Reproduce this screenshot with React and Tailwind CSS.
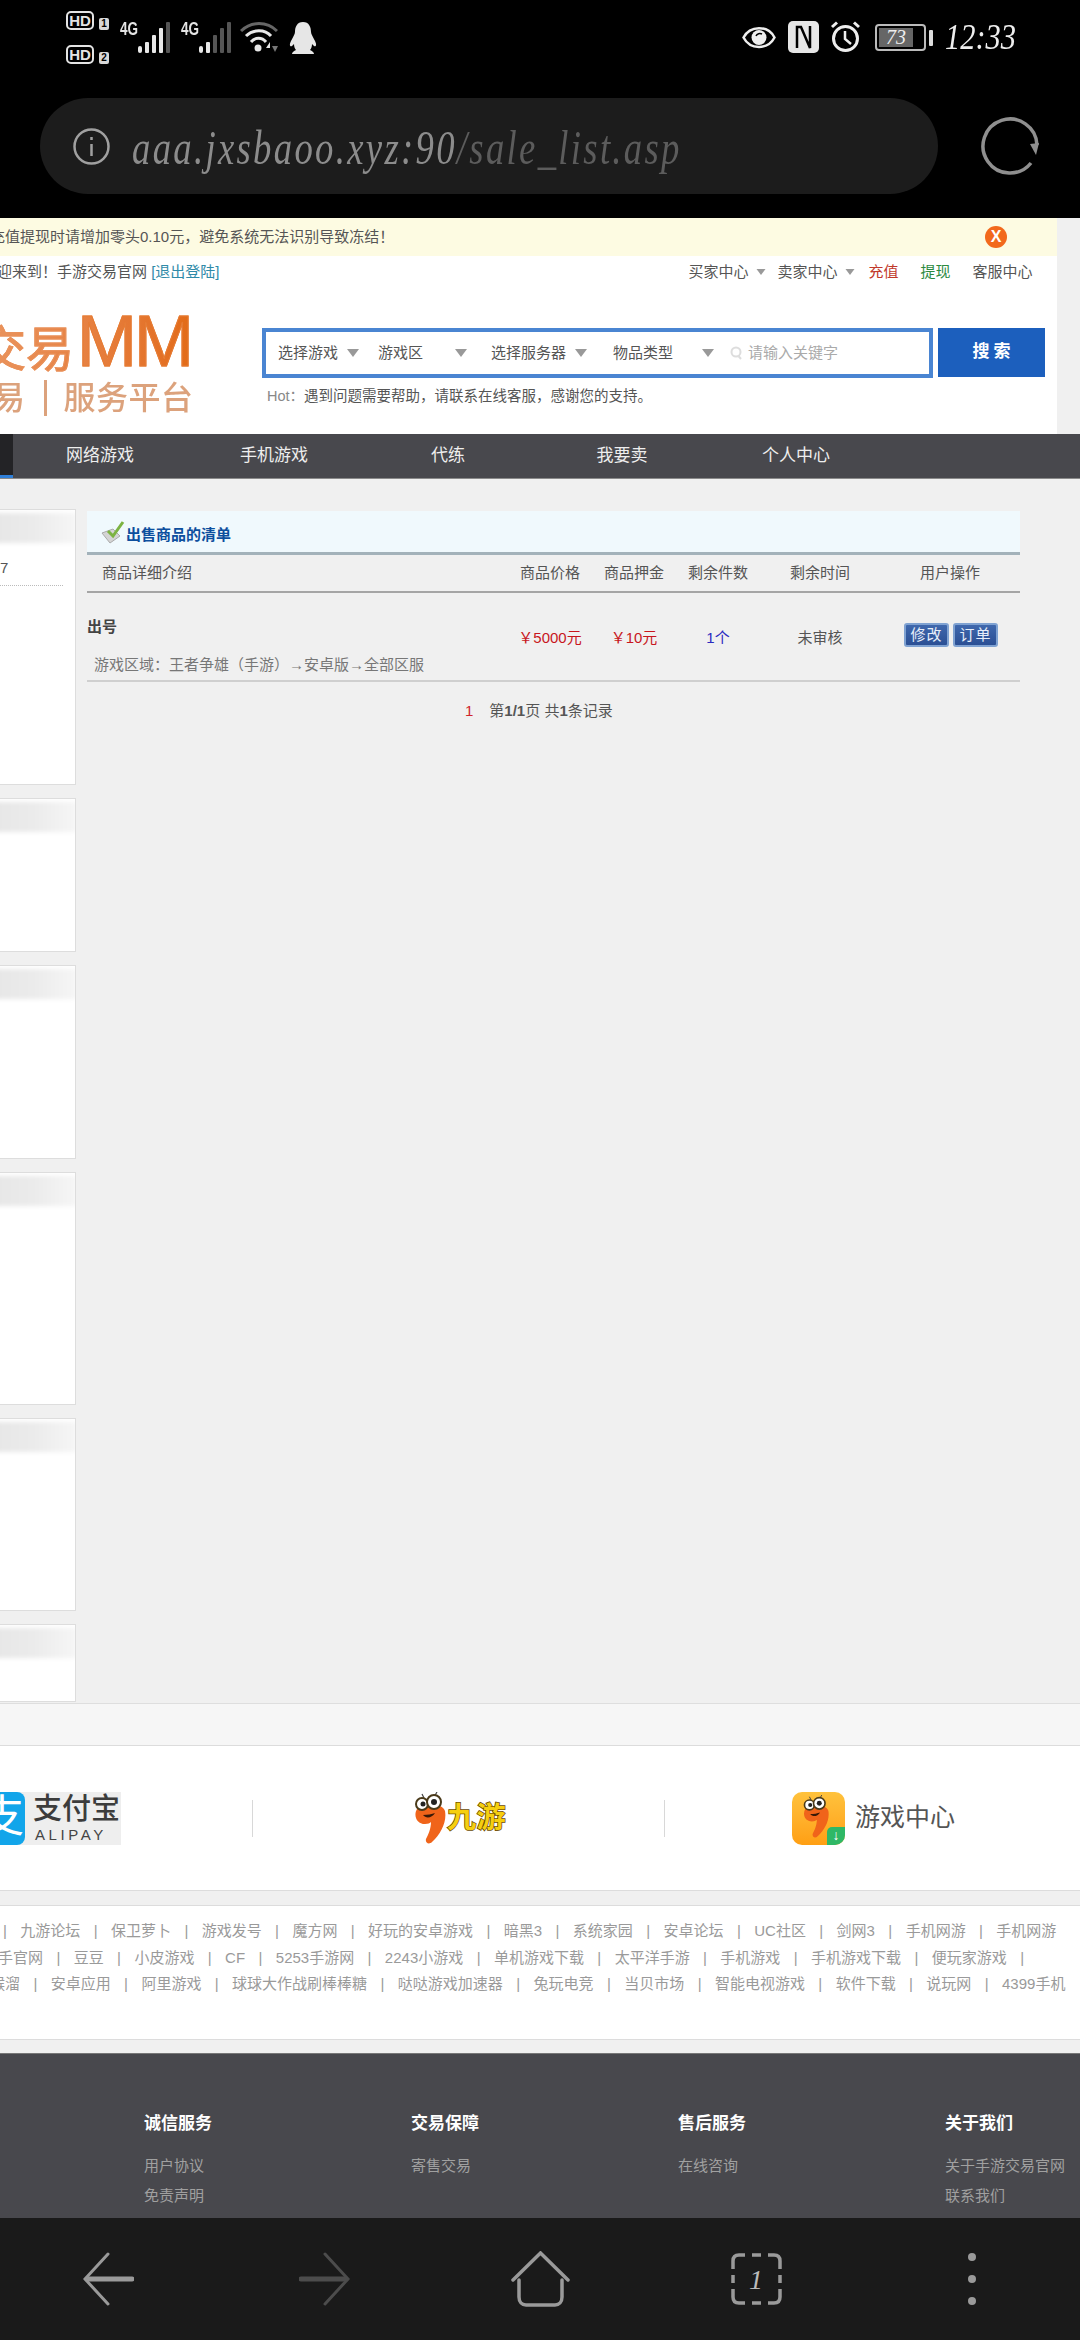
import React from 'react';

const sans = "font-['Liberation_Sans','Noto_Sans_CJK_SC',sans-serif]";

const menuItems = ['网络游戏', '手机游戏', '代练', '我要卖', '个人中心'];

const linkRows = [
  { offset: 'ml-[3px]', lead: true, items: ['九游论坛', '保卫萝卜', '游戏发号', '魔方网', '好玩的安卓游戏', '暗黑3', '系统家园', '安卓论坛', 'UC社区', '剑网3', '手机网游', '手机网游'] },
  { offset: 'ml-[-2px]', trail: true, items: ['手官网', '豆豆', '小皮游戏', 'CF', '5253手游网', '2243小游戏', '单机游戏下载', '太平洋手游', '手机游戏', '手机游戏下载', '便玩家游戏'] },
  { offset: 'ml-[-10px]', items: ['猴溜', '安卓应用', '阿里游戏', '球球大作战刷棒棒糖', '哒哒游戏加速器', '兔玩电竞', '当贝市场', '智能电视游戏', '软件下载', '说玩网', '4399手机'] },
];

const footerColumns = [
  { title: '诚信服务', links: ['用户协议', '免责声明'] },
  { title: '交易保障', links: ['寄售交易'] },
  { title: '售后服务', links: ['在线咨询'] },
  { title: '关于我们', links: ['关于手游交易官网', '联系我们'] },
];

const sidePanels = ['h-[276px]', 'h-[154px]', 'h-[194px]', 'h-[233px]', 'h-[193px]', 'h-[78px]'];

const HdBadge = ({ n }) => (
  <div className="flex items-end h-[19px]">
    <div className="w-[28px] h-[19px] rounded-[5px] border-2 border-[#e4e4e4] text-[#e4e4e4] text-[15px] font-bold leading-[15px] text-center">HD</div>
    <div className="ml-[5px] w-[10px] h-[12px] rounded-[2px] bg-[#d8d8d8] text-black text-[10px] font-bold leading-[12px] text-center">{n}</div>
  </div>
);

const Signal = ({ dim }) => (
  <div className="flex items-start">
    <span className="mt-[22px] w-[18px] text-[18px] font-bold leading-[15px] text-[#e4e4e4] scale-x-[.75] origin-left">4G</span>
    <svg width="32" height="31" viewBox="0 0 32 31" className="mt-[22px]">
      <rect x="0" y="24" width="4" height="7" rx="2" fill="#e8e8e8" />
      <rect x="7" y="20" width="4" height="11" rx="1" fill="#e8e8e8" />
      <rect x="14" y="13" width="4" height="18" rx="1" fill={dim >= 2 ? '#555' : '#e8e8e8'} />
      <rect x="21" y="6" width="4" height="25" rx="1" fill={dim >= 2 ? '#555' : '#e8e8e8'} />
      <rect x="28" y="0" width="4" height="31" rx="1" fill="#555" />
    </svg>
  </div>
);

const Wifi = () => (
  <svg width="38" height="31" viewBox="0 0 38 31" className="ml-[9px] mt-[22px]" fill="none">
    <path d="M1 9 C11 -1 27 -1 37 9" stroke="#666" strokeWidth="3" />
    <path d="M6 14 C13 7 25 7 31 14" stroke="#e8e8e8" strokeWidth="3" />
    <path d="M11 20 C15 15 22 15 26 20" stroke="#e8e8e8" strokeWidth="3" />
    <circle cx="18" cy="26" r="3.5" fill="#e8e8e8" />
    <path d="M26 26 l4 -6 v6 z" fill="#e8e8e8" />
    <path d="M32 24 h6 l-3 6 z" fill="#777" />
  </svg>
);

const Penguin = () => (
  <svg width="28" height="32" viewBox="0 0 28 32" className="ml-[11px] mt-[22px]" fill="#e6e6e6">
    <path d="M14 0 C20 0 22 5 22 10 C22 12 24 15 26 19 C28 23 27 25 25 24 L23 22 C23 25 22 27 21 28 C23 29 25 30 25 32 L3 32 C3 30 5 29 7 28 C6 27 5 25 5 22 L3 24 C1 25 0 23 2 19 C4 15 6 12 6 10 C6 5 8 0 14 0 Z" />
  </svg>
);

const Eye = () => (
  <svg width="34" height="27" viewBox="0 0 34 27" fill="none" className="mt-[24px]">
    <path d="M1.5 13.5 C8 1 26 1 32.5 13.5 C26 26 8 26 1.5 13.5 Z" stroke="#eee" strokeWidth="2.5" />
    <circle cx="17" cy="13.5" r="7.5" fill="#eee" />
    <path d="M14 12 C15 9.5 18 9 20 10" stroke="#000" strokeWidth="1.5" />
  </svg>
);

const Nfc = () => (
  <svg width="31" height="32" viewBox="0 0 31 32" className="ml-[12px] mt-[21px]">
    <rect width="31" height="32" rx="5" fill="#e6e6e6" />
    <path d="M9 27 V6 H13 L22 27 V5" fill="none" stroke="#000" strokeWidth="2.5" />
  </svg>
);

const Alarm = () => (
  <svg width="31" height="31" viewBox="0 0 31 31" fill="none" className="ml-[11px] mt-[21px]">
    <circle cx="15.5" cy="17.5" r="12" stroke="#eee" strokeWidth="3" />
    <path d="M15 10 V18 L21 23" stroke="#eee" strokeWidth="2.5" />
    <path d="M2 6 L7 1.5 M29 6 L24 1.5" stroke="#eee" strokeWidth="3" />
  </svg>
);

const Battery = () => (
  <div className="flex items-center ml-[14px] mt-[24px]">
    <div className="w-[51px] h-[27px] rounded-[4px] border-2 border-[#bbb] p-[2px]">
      <div className="w-[34px] h-full bg-[#666] text-[#eee] text-[20px] italic leading-[19px] text-center font-['Liberation_Serif',serif]">73</div>
    </div>
    <div className="ml-[3px] w-[4px] h-[16px] bg-[#ddd] rounded-[1px]"></div>
  </div>
);

const StatusBar = () => (
  <div className="h-[98px] flex justify-between pl-[66px] pr-[65px]">
    <div className="flex">
      <div className="flex flex-col gap-[15px] pt-[11px] w-[54px]">
        <HdBadge n="1" />
        <HdBadge n="2" />
      </div>
      <Signal dim={1} />
      <div className="w-[11px]"></div>
      <Signal dim={2} />
      <Wifi />
      <Penguin />
    </div>
    <div className="flex items-start">
      <Eye />
      <Nfc />
      <Alarm />
      <Battery />
      <span className="ml-[12px] mt-[19px] w-[70px] whitespace-nowrap text-[35px] leading-[37px] italic text-[#eee] scale-x-[.87] origin-left font-['Liberation_Serif',serif]">12:33</span>
    </div>
  </div>
);

const AddressBar = () => (
  <div className="h-[96px] flex items-center">
    <div className="ml-[40px] w-[898px] shrink-0 h-full rounded-full bg-[#1c1c1c] flex items-center pl-[33px]">
      <svg width="37" height="37" viewBox="0 0 37 37" fill="none" stroke="#a0a0a0" strokeWidth="2.5" className="shrink-0">
        <circle cx="18.5" cy="18.5" r="17" />
        <path d="M18.5 16 V28" />
        <path d="M18.5 9 V12" />
      </svg>
      <div className="ml-[22px] mt-[3px] text-[48px] leading-[56px] italic tracking-[3px] scale-x-[.765] origin-left whitespace-nowrap font-['Liberation_Serif',serif] text-[#8c8c8c]">
        aaa.jxsbaoo.xyz:90<span className="text-[#5c5c5c]">/sale_list.asp</span>
      </div>
    </div>
    <svg width="58" height="58" viewBox="0 0 58 58" fill="none" className="ml-[43px] shrink-0">
      <path d="M50 46 A27 27 0 1 1 56 28" stroke="#8f8f8f" strokeWidth="3.5" />
      <path d="M58 26 L55 38 L49 27 Z" fill="#8f8f8f" />
    </svg>
  </div>
);

const Caret = ({ className = '' }) => (
  <span className={`inline-block w-0 h-0 border-x-[6px] border-x-transparent border-t-[8px] border-t-[#999] ${className}`}></span>
);

const SearchBox = () => (
  <div className="flex items-start">
    <div className="w-[671px] h-[50px] border-[4px] border-[#4a85d2] bg-white flex items-center text-[15px] text-[#555] whitespace-nowrap">
      <span className="ml-[12px]">选择游戏</span>
      <Caret className="ml-[9px]" />
      <span className="ml-[19px]">游戏区</span>
      <Caret className="ml-[32px]" />
      <span className="ml-[24px]">选择服务器</span>
      <Caret className="ml-[9px]" />
      <span className="ml-[26px]">物品类型</span>
      <Caret className="ml-[29px]" />
      <svg width="12" height="14" viewBox="0 0 12 14" fill="none" stroke="#ddd" strokeWidth="2" className="ml-[16px]">
        <circle cx="6" cy="6" r="4.5" />
        <path d="M8.5 10 L11 13" />
      </svg>
      <span className="ml-[6px] text-[#aaa]">请输入关键字</span>
    </div>
    <div className="ml-[5px] w-[107px] h-[49px] bg-[#1c5fbd] text-white font-bold text-[17px] tracking-[4px] leading-[47px] text-center pl-[4px]">搜索</div>
  </div>
);

const Logo = () => (
  <div className="w-[262px] pt-[20px] overflow-hidden whitespace-nowrap">
    <div className="ml-[-22px] w-[216px] h-[66px] leading-[66px] blur-[0.4px] text-transparent bg-clip-text bg-linear-to-r from-[#ea9660] to-[#e26a14]">
      <span className="text-[48px] [-webkit-text-stroke:1px_#e9915a]">交易</span>
      <span className="ml-[3px] text-[72px] tracking-[-3px] font-['Liberation_Sans',sans-serif] [-webkit-text-stroke:1px_#e67c34]">MM</span>
    </div>
    <div className="mt-[5px] ml-[-7px] flex items-center h-[38px] font-medium text-[#dca27c] text-[32px] tracking-[0.5px] leading-[38px] blur-[0.4px]">
      <span>易</span>
      <span className="ml-[18px] w-[3px] h-[36px] bg-[#dca27c]"></span>
      <span className="ml-[17px]">服务平台</span>
    </div>
  </div>
);

const Header = () => (
  <div className="w-[1057px] h-[216px] bg-white">
    <div className="h-[38px] bg-[#fdfbe2] flex items-center justify-between pr-[50px] text-[15px] text-[#555]">
      <span className="ml-[-10px]">充值提现时请增加零头0.10元，避免系统无法识别导致冻结！</span>
      <span className="w-[22px] h-[22px] rounded-full bg-[#f2691c] text-white text-[16px] font-bold leading-[22px] text-center">X</span>
    </div>
    <div className="h-[32px] flex items-center text-[15px] text-[#555] whitespace-nowrap">
      <span className="ml-[-18px]">欢迎来到！手游交易官网 <span className="text-[#2f8aa8]">[退出登陆]</span></span>
      <span className="ml-[469px]">买家中心</span>
      <Caret className="ml-[6px] scale-75" />
      <span className="ml-[11px]">卖家中心</span>
      <Caret className="ml-[6px] scale-75" />
      <span className="ml-[13px] text-[#c1392b]">充值</span>
      <span className="ml-[22px] text-[#2c8a3f]">提现</span>
      <span className="ml-[22px]">客服中心</span>
    </div>
    <div className="flex">
      <Logo />
      <div className="pt-[40px]">
        <SearchBox />
        <div className="mt-[8px] ml-[5px] text-[14.5px] leading-[20px] text-[#555]">
          <span className="text-[#888]">Hot：</span>遇到问题需要帮助，请联系在线客服，感谢您的支持。
        </div>
      </div>
    </div>
  </div>
);

const Nav = () => (
  <div className="h-[45px] bg-[#48484d] flex border-b border-b-[#8a8a8a]">
    <div className="w-[13px] h-full bg-[#232326] border-b-[3px] border-b-[#2f7fd8]"></div>
    {menuItems.map((item) => (
      <div key={item} className="w-[174px] text-center text-[17px] leading-[43px] text-[#eee]">{item}</div>
    ))}
  </div>
);

const SidePanel = ({ height, first }) => (
  <div className={`${height} bg-white border border-[#ddd] border-l-0 overflow-hidden`}>
    <div className="h-[30px] mt-[3px] ml-[-12px] mr-[-2px] bg-linear-to-r from-[#e6e6e6] via-[#ebebeb] to-[#f6f6f6] blur-[2px]"></div>
    {first && (
      <div className="mt-[15px] pr-[12px]">
        <div className="text-[15px] leading-[20px] text-[#555]">7</div>
        <div className="mt-[7px] border-b border-dotted border-[#bbb]"></div>
      </div>
    )}
  </div>
);

const Sidebar = () => (
  <div className="w-[76px] shrink-0 flex flex-col gap-[13px]">
    {sidePanels.map((height, i) => (
      <SidePanel key={height} height={height} first={i === 0} />
    ))}
  </div>
);

const CheckIcon = () => (
  <svg width="25" height="24" viewBox="0 0 25 24" fill="none">
    <path d="M1 13 L12 9 L19 16 L9 23 Z" fill="#d4d4d4" stroke="#aaa" />
    <path d="M7 11 L12 16 L22 2" stroke="#7cb342" strokeWidth="3" />
  </svg>
);

const tableCols = 'grid grid-cols-[421px_84px_84px_84px_120px_140px] items-center text-center';

const OpButton = ({ label }) => (
  <span className="w-[45px] h-[24px] rounded-[3px] border-2 border-[#7fa2d2] bg-linear-to-b from-[#3f68ad] to-[#2b4f94] text-[#e6eefa] text-[15px] leading-[20px] tracking-[1px]">{label}</span>
);

const SaleTable = () => (
  <div className="ml-[11px] w-[933px] mt-[2px] text-[15px]">
    <div className="h-[44px] bg-[#f0f9fd] border-b-[3px] border-b-[#a3b2ba] flex items-center pl-[14px]">
      <CheckIcon />
      <span className="mt-[7px] font-bold text-[#0d4f9e]">出售商品的清单</span>
    </div>
    <div className={`${tableCols} h-[38px] border-b-2 border-b-[#a5a5a5] text-[#555]`}>
      <div className="text-left pl-[15px]">商品详细介绍</div>
      <div>商品价格</div>
      <div>商品押金</div>
      <div>剩余件数</div>
      <div>剩余时间</div>
      <div>用户操作</div>
    </div>
    <div className="h-[89px] pt-[15px] border-b-2 border-b-[#cfcfcf]">
      <div className={`${tableCols} h-[60px]`}>
        <div className="text-left font-bold text-[#444] mb-[22px]">出号</div>
        <div className="text-[#c8161d]">￥5000元</div>
        <div className="text-[#c8161d]">￥10元</div>
        <div className="text-[#2a2ac0]">1个</div>
        <div className="text-[#555]">未审核</div>
        <div className="flex justify-center gap-[4px] pl-[2px] mb-[6px]">
          <OpButton label="修改" />
          <OpButton label="订单" />
        </div>
      </div>
      <div className="pl-[7px] mt-[-13px] leading-[20px] text-[#777]">游戏区域：王者争雄（手游）→安卓版→全部区服</div>
    </div>
    <div className="mt-[19px] leading-[20px] flex text-[#555] pl-[378px]">
      <span className="text-[#d0262c]">1</span>
      <span className="ml-[16px]">第<b>1/1</b>页 共<b>1</b>条记录</span>
    </div>
  </div>
);

const Mascot = ({ width, height }) => (
  <svg width={width} height={height} viewBox="0 0 34 52">
    <path d="M4 17 C0 24 4 32 12 32 C15 32 17 31 18 30 C18 37 15 43 13 47 C12 51 16 53 19 50 C28 42 34 30 32 19 C30 11 8 9 4 17 Z" fill="#f0641a" />
    <path d="M9 2 L11 6 M24 0 L21 5" stroke="#444" strokeWidth="1.2" />
    <circle cx="9" cy="12" r="6" fill="#fff" stroke="#4a3a1a" strokeWidth="2" />
    <circle cx="21" cy="10" r="7" fill="#fff" stroke="#4a3a1a" strokeWidth="2" />
    <circle cx="10" cy="12" r="2.5" fill="#222" />
    <circle cx="21" cy="10" r="3" fill="#222" />
    <path d="M10 23 C13 27 19 26 22 21 C19 22 14 23 10 23 Z" fill="#3a1a08" />
  </svg>
);

const Partners = () => (
  <div className="h-[146px] bg-white border-y border-y-[#dcdcdc] flex items-center overflow-hidden">
    <div className="w-[121px] h-[53px] flex shrink-0 bg-[#eeeeee]">
      <div className="w-[25px] h-full bg-[#12a5ea] rounded-r-[8px] overflow-hidden text-white text-[44px] leading-[50px] whitespace-nowrap">
        <span className="block ml-[-20px]">支</span>
      </div>
      <div className="ml-[8px]">
        <div className="text-[29px] leading-[34px] text-[#3c3c3c] font-medium whitespace-nowrap">支付宝</div>
        <div className="text-[15px] leading-[18px] tracking-[3.6px] text-[#444] pl-[2px]">ALIPAY</div>
      </div>
    </div>
    <div className="ml-[131px] w-px h-[37px] bg-[#d8d8d8]"></div>
    <div className="ml-[160px] flex items-center">
      <Mascot width={34} height={52} />
      <span className="text-[29px] font-bold tracking-[0.5px] leading-[32px] text-[#f6cf10] [-webkit-text-stroke:1.5px_#6a4a00] [paint-order:stroke_fill] whitespace-nowrap">九游</span>
    </div>
    <div className="ml-[158px] w-px h-[37px] bg-[#d8d8d8]"></div>
    <div className="ml-[127px] relative w-[53px] h-[53px] rounded-[10px] bg-linear-to-b from-[#ffc23c] to-[#ff9f12] overflow-hidden flex justify-center pt-[3px] pr-[6px]">
      <Mascot width={28} height={43} />
      <div className="absolute right-0 bottom-0 w-[18px] h-[18px] bg-[#2fb866] rounded-tl-[5px] text-white text-[14px] leading-[17px] font-bold text-center">↓</div>
    </div>
    <div className="ml-[10px] text-[25px] text-[#555] whitespace-nowrap">游戏中心</div>
  </div>
);

const FriendLinks = () => (
  <div className="h-[135px] bg-white border-y border-y-[#dcdcdc] pt-[12px] text-[15px] leading-[26.5px] text-[#9a9a9a] overflow-hidden">
    {linkRows.map((row) => (
      <div key={row.items[0]} className={`flex gap-[13.4px] whitespace-nowrap ${row.offset}`}>
        {row.lead && <span>|</span>}
        {row.items.map((item, i) => (
          <React.Fragment key={item + i}>
            {i > 0 && <span>|</span>}
            <span>{item}</span>
          </React.Fragment>
        ))}
        {row.trail && <span>|</span>}
      </div>
    ))}
  </div>
);

const SiteFooter = () => (
  <div className="h-[165px] bg-[#48484d] border-t border-t-[#777] flex pl-[144px] pt-[58px] overflow-hidden">
    {footerColumns.map((col) => (
      <div key={col.title} className="w-[267px] shrink-0 whitespace-nowrap">
        <div className="text-[17px] font-bold leading-[24px] text-white">{col.title}</div>
        <div className="mt-[15px] text-[15px] leading-[30px] text-[#a0a0a0]">
          {col.links.map((link) => <div key={link}>{link}</div>)}
        </div>
      </div>
    ))}
  </div>
);

const BottomBar = () => (
  <div className="h-[122px] bg-[#1a1a1a] flex items-center">
    <svg width="51" height="54" viewBox="0 0 51 54" fill="none" stroke="#9a9a9a" strokeLinecap="round" className="ml-[83px]">
      <path d="M25 2 L2 27 L25 52" strokeWidth="3" />
      <path d="M4 27 H49" strokeWidth="5" />
    </svg>
    <svg width="51" height="54" viewBox="0 0 51 54" fill="none" stroke="#4c4c4c" strokeLinecap="round" className="ml-[165px]">
      <path d="M26 2 L49 27 L26 52" strokeWidth="3" />
      <path d="M2 27 H47" strokeWidth="5" />
    </svg>
    <svg width="59" height="56" viewBox="0 0 59 56" fill="none" stroke="#9a9a9a" strokeWidth="3.5" strokeLinecap="round" className="ml-[161px]">
      <path d="M2 29 L29.5 2 L57 29" />
      <path d="M8 29 V46 C8 51 11 54 15 54 H44 C48 54 51 51 51 46 V29" />
    </svg>
    <svg width="51" height="52" viewBox="0 0 51 52" fill="none" stroke="#9a9a9a" strokeWidth="3.5" className="ml-[161px]">
      <path d="M2 16 V8 C2 4 4 2 8 2 H14" />
      <path d="M37 2 H43 C47 2 49 4 49 8 V16" />
      <path d="M49 36 V44 C49 48 47 50 43 50 H37" />
      <path d="M14 50 H8 C4 50 2 48 2 44 V36" />
      <path d="M21 2 H30 M21 50 H30 M2 22 V30 M49 22 V30" />
      <text x="25" y="36" textAnchor="middle" fontSize="28" fontStyle="italic" fontFamily="Liberation Serif" fill="#bbb" stroke="none">1</text>
    </svg>
    <div className="ml-[186px] flex flex-col gap-[14px]">
      <span className="w-[8px] h-[8px] rounded-full bg-[#9a9a9a]"></span>
      <span className="w-[8px] h-[8px] rounded-full bg-[#9a9a9a]"></span>
      <span className="w-[8px] h-[8px] rounded-full bg-[#9a9a9a]"></span>
    </div>
  </div>
);

export default function App() {
  return (
    <div className={`w-[1080px] h-[2340px] overflow-hidden bg-[#f0f0f0] ${sans}`}>
      <div className="bg-black h-[218px]">
        <StatusBar />
        <AddressBar />
      </div>
      <Header />
      <Nav />
      <div className="h-[1224px] pt-[30px] flex">
        <Sidebar />
        <SaleTable />
      </div>
      <div className="h-[42px] bg-[#f6f6f6] border-t border-t-[#dedede]"></div>
      <Partners />
      <div className="h-[14px] bg-[#f0f0f0]"></div>
      <FriendLinks />
      <div className="h-[13px] bg-[#f0f0f0]"></div>
      <SiteFooter />
      <BottomBar />
    </div>
  );
}
